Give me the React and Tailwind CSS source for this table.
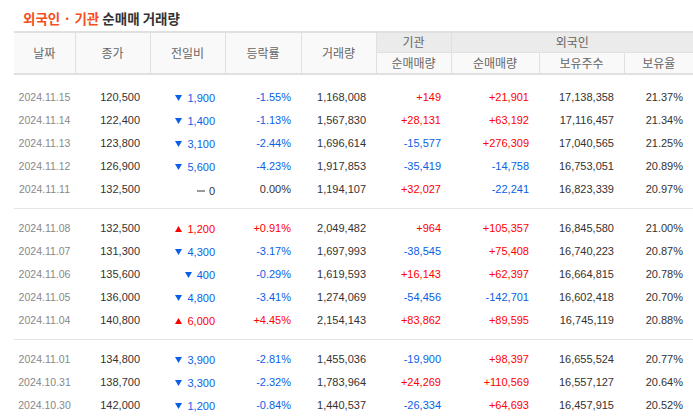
import React from 'react';

const groups = [
  [
    ['2024.11.15', '120,500', 'dn', '1,900', '-1.55%', '1,168,008', '+149', '+21,901', '17,138,358', '21.37%'],
    ['2024.11.14', '122,400', 'dn', '1,400', '-1.13%', '1,567,830', '+28,131', '+63,192', '17,116,457', '21.34%'],
    ['2024.11.13', '123,800', 'dn', '3,100', '-2.44%', '1,696,614', '-15,577', '+276,309', '17,040,565', '21.25%'],
    ['2024.11.12', '126,900', 'dn', '5,600', '-4.23%', '1,917,853', '-35,419', '-14,758', '16,753,051', '20.89%'],
    ['2024.11.11', '132,500', 'eq', '0', '0.00%', '1,194,107', '+32,027', '-22,241', '16,823,339', '20.97%'],
  ],
  [
    ['2024.11.08', '132,500', 'up', '1,200', '+0.91%', '2,049,482', '+964', '+105,357', '16,845,580', '21.00%'],
    ['2024.11.07', '131,300', 'dn', '4,300', '-3.17%', '1,697,993', '-38,545', '+75,408', '16,740,223', '20.87%'],
    ['2024.11.06', '135,600', 'dn', '400', '-0.29%', '1,619,593', '+16,143', '+62,397', '16,664,815', '20.78%'],
    ['2024.11.05', '136,000', 'dn', '4,800', '-3.41%', '1,274,069', '-54,456', '-142,701', '16,602,418', '20.70%'],
    ['2024.11.04', '140,800', 'up', '6,000', '+4.45%', '2,154,143', '+83,862', '+89,595', '16,745,119', '20.88%'],
  ],
  [
    ['2024.11.01', '134,800', 'dn', '3,900', '-2.81%', '1,455,036', '-19,900', '+98,397', '16,655,524', '20.77%'],
    ['2024.10.31', '138,700', 'dn', '3,300', '-2.32%', '1,783,964', '+24,269', '+110,569', '16,557,127', '20.64%'],
    ['2024.10.30', '142,000', 'dn', '1,200', '-0.84%', '1,440,537', '-26,334', '+64,693', '16,457,915', '20.52%'],
  ],
];

// sign colour for +/- numbers
function tone(v) {
  if (v.startsWith('+')) return 'text-[#f00]';
  if (v.startsWith('-')) return 'text-[#0a5fe6]';
  return 'text-[#333]';
}

function Change({ dir, value }) {
  if (dir === 'eq') {
    return (
      <span className="inline-flex items-center gap-[4px] text-[#333]">
        <span className="inline-block w-[8px] h-[2px] bg-[#999]" />
        {value}
      </span>
    );
  }
  const up = dir === 'up';
  return (
    <span className={`inline-flex items-center gap-[5px] ${up ? 'text-[#f00]' : 'text-[#0a5fe6]'}`}>
      <svg width="7" height="6" viewBox="0 0 7 6" className="block">
        {up
          ? <path d="M3.5 0 L7 6 L0 6 Z" fill="currentColor" />
          : <path d="M0 0 L7 0 L3.5 6 Z" fill="currentColor" />}
      </svg>
      {value}
    </span>
  );
}

const th = 'font-normal text-[#666] text-[12px] border-[#e0e0e0]';
const td = 'h-[23px] p-0 pr-[10px] text-right whitespace-nowrap';

export default function App() {
  return (
    <div className="w-[693px] h-[419px] overflow-hidden bg-white" style={{ fontFamily: '"Liberation Sans", "Noto Sans CJK KR", sans-serif' }}>
      <h2 className="pl-[23px] pt-[8px] h-[31px] text-[13.5px] font-bold leading-[20px]" style={{ fontFamily: '"Noto Sans CJK KR", sans-serif' }}>
        <span className="text-[#f4501e]">외국인 · 기관</span>{' '}
        <span className="text-[#333]">순매매 거래량</span>
      </h2>
      <div className="pl-[14px]">
        <table className="border-collapse table-fixed w-[679px] text-[11px]">
          <colgroup>
            <col className="w-[61px]" />
            <col className="w-[75px]" />
            <col className="w-[75px]" />
            <col className="w-[76px]" />
            <col className="w-[75px]" />
            <col className="w-[75px]" />
            <col className="w-[88px]" />
            <col className="w-[85px]" />
            <col className="w-[69px]" />
          </colgroup>
          <thead style={{ fontFamily: '"Noto Sans CJK KR", sans-serif' }}>
            <tr className="border-t-[2px] border-[#e0e0e0]">
              <th rowSpan={2} className={`${th} bg-[#f9f9f9] border-r`}>날짜</th>
              <th rowSpan={2} className={`${th} bg-[#f9f9f9] border-r`}>종가</th>
              <th rowSpan={2} className={`${th} bg-[#f9f9f9] border-r`}>전일비</th>
              <th rowSpan={2} className={`${th} bg-[#f9f9f9] border-r`}>등락률</th>
              <th rowSpan={2} className={`${th} bg-[#f9f9f9] border-r`}>거래량</th>
              <th className={`${th} h-[20px] bg-[#ebebeb] border-r`}>기관</th>
              <th colSpan={3} className={`${th} h-[20px] bg-[#ebebeb]`}>외국인</th>
            </tr>
            <tr className="border-b-[2px] border-[#e0e0e0]">
              <th className={`${th} h-[22px] bg-[#f9f9f9] border-r border-t`}>순매매량</th>
              <th className={`${th} h-[22px] bg-[#f9f9f9] border-r border-t`}>순매매량</th>
              <th className={`${th} h-[22px] bg-[#f9f9f9] border-r border-t`}>보유주수</th>
              <th className={`${th} h-[22px] bg-[#f9f9f9] border-t`}>보유율</th>
            </tr>
          </thead>
          {groups.map((rows, gi) => (
            <tbody key={gi} className={gi < groups.length - 1 ? 'border-b border-[#e5e5e5]' : ''}>
              <tr><td colSpan={9} className={gi === 0 ? 'h-[12px] p-0' : 'h-[9px] p-0'} /></tr>
              {rows.map(r => (
                <tr key={r[0]}>
                  <td className="h-[23px] p-0 text-center text-[#888] text-[10.5px] whitespace-nowrap">{r[0]}</td>
                  <td className={`${td} text-[#333]`}>{r[1]}</td>
                  <td className={td}><Change dir={r[2]} value={r[3]} /></td>
                  <td className={`${td} ${tone(r[4])}`}>{r[4]}</td>
                  <td className={`${td} text-[#333]`}>{r[5]}</td>
                  <td className={`${td} ${tone(r[6])}`}>{r[6]}</td>
                  <td className={`${td} ${tone(r[7])}`}>{r[7]}</td>
                  <td className={`${td} text-[#333]`}>{r[8]}</td>
                  <td className={`${td} text-[#333]`}>{r[9]}</td>
                </tr>
              ))}
              {gi < groups.length - 1 && <tr><td colSpan={9} className="h-[7px] p-0" /></tr>}
            </tbody>
          ))}
        </table>
      </div>
    </div>
  );
}
